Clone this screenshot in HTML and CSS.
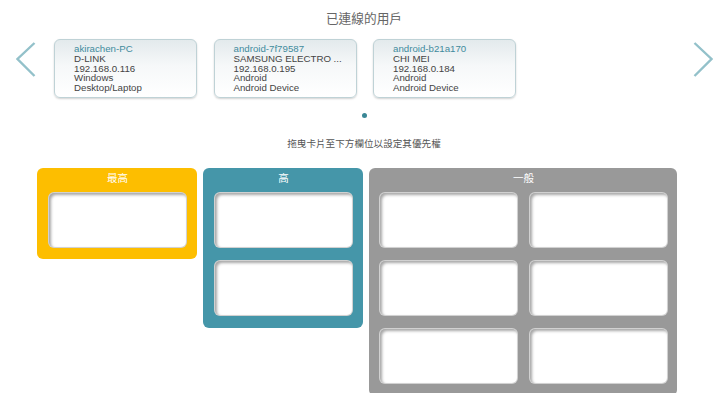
FILE: index.html
```html
<!DOCTYPE html>
<html lang="zh-Hant">
<head>
<meta charset="utf-8">
<title>已連線的用戶</title>
<link rel="stylesheet" href="styles.css">
</head>
<body>
<div class="page">
  <h1 class="title">已連線的用戶</h1>
  <div class="carousel">
    <svg class="arrow arrow-left" width="20" height="36" viewBox="0 0 20 36"><polyline points="18.5,1 1.5,17 18.5,34" fill="none" stroke="#93c1ca" stroke-width="2.4"/></svg>
    <div class="cards">
      <div class="card">
        <div class="card-name">akirachen-PC</div>
        <div>D-LINK</div>
        <div>192.168.0.116</div>
        <div>Windows</div>
        <div>Desktop/Laptop</div>
      </div>
      <div class="card">
        <div class="card-name">android-7f79587</div>
        <div>SAMSUNG ELECTRO ...</div>
        <div>192.168.0.195</div>
        <div>Android</div>
        <div>Android Device</div>
      </div>
      <div class="card">
        <div class="card-name">android-b21a170</div>
        <div>CHI MEI</div>
        <div>192.168.0.184</div>
        <div>Android</div>
        <div>Android Device</div>
      </div>
    </div>
    <svg class="arrow arrow-right" width="20" height="36" viewBox="0 0 20 36"><polyline points="1.5,1 18.5,17 1.5,34" fill="none" stroke="#93c1ca" stroke-width="2.4"/></svg>
  </div>
  <div class="pager"><span class="dot"></span></div>
  <p class="hint">拖曳卡片至下方欄位以設定其優先權</p>
  <div class="columns">
    <div class="col col-top">
      <div class="col-head">最高</div>
      <div class="slots">
        <div class="slot"></div>
      </div>
    </div>
    <div class="col col-high">
      <div class="col-head">高</div>
      <div class="slots">
        <div class="slot"></div>
        <div class="slot"></div>
      </div>
    </div>
    <div class="col col-normal">
      <div class="col-head">一般</div>
      <div class="slots slots-2">
        <div class="slot"></div>
        <div class="slot"></div>
        <div class="slot"></div>
        <div class="slot"></div>
        <div class="slot"></div>
        <div class="slot"></div>
      </div>
    </div>
  </div>
</div>
</body>
</html>
```
FILE: styles.css
```css
* { box-sizing: border-box; }
html, body { margin: 0; padding: 0; background: #fff; }
body {
  font-family: "Liberation Sans", Arial, "Noto Sans CJK TC", sans-serif;
  color: #444;
}
.page { width: 728px; }

.title {
  margin: 0;
  padding-top: 10px;
  height: 39px;
  text-align: center;
  font-family: "Noto Sans CJK TC", sans-serif;
  font-weight: normal;
  font-size: 12.7px;
  line-height: 16px;
  color: #666;
}

.carousel {
  display: flex;
  align-items: flex-start;
  padding: 0 15px 0 16px;
  height: 59px;
}
.arrow { display: block; flex: none; margin-top: 3px; }
.arrow-right { margin-left: auto; }
.cards {
  display: flex;
  gap: 16.5px;
  margin-left: 18px;
}
.card {
  width: 143px;
  height: 59px;
  border: 1px solid #bfd2d6;
  border-radius: 6px;
  background: linear-gradient(to bottom, #e3eaec 0%, #f6f8f9 45%, #ffffff 100%);
  box-shadow: 0 1px 2px rgba(0, 0, 0, 0.18);
  padding: 4px 0 0 19px;
  font-size: 9.7px;
  line-height: 9.75px;
  color: #444;
  white-space: nowrap;
}
.card-name { color: #3f8b9d; }

.pager {
  display: flex;
  justify-content: center;
  padding-top: 15px;
  height: 31px;
}
.dot {
  width: 5px;
  height: 5px;
  border-radius: 50%;
  background: #3a8796;
}

.hint {
  margin: 0;
  height: 39px;
  padding-top: 8px;
  text-align: center;
  font-family: "Noto Sans CJK TC", sans-serif;
  font-size: 9.6px;
  line-height: 12px;
  color: #555;
}

.columns {
  display: flex;
  align-items: flex-start;
  gap: 6px;
  padding-left: 37px;
}
.col {
  width: 160px;
  border-radius: 6px;
  padding: 0 10px 12px 11px;
}
.col-top { background: #fdbe00; padding-bottom: 11px; }
.col-high { background: #4596a9; }
.col-normal { background: #999999; width: 308px; padding: 0 9px 12px 10px; }
.col-head {
  height: 24px;
  text-align: center;
  font-family: "Noto Sans CJK TC", sans-serif;
  font-size: 10.5px;
  line-height: 20px;
  color: #fff;
}
.slots {
  display: flex;
  flex-direction: column;
  gap: 12px;
}
.slots-2 {
  display: grid;
  grid-template-columns: 139px 139px;
  gap: 12px 11px;
}
.slot {
  height: 56px;
  background: #fff;
  border: 1px solid rgba(0, 0, 0, 0.18);
  border-radius: 6px;
  box-shadow: inset 2px 2px 3px rgba(0, 0, 0, 0.35);
}
```
